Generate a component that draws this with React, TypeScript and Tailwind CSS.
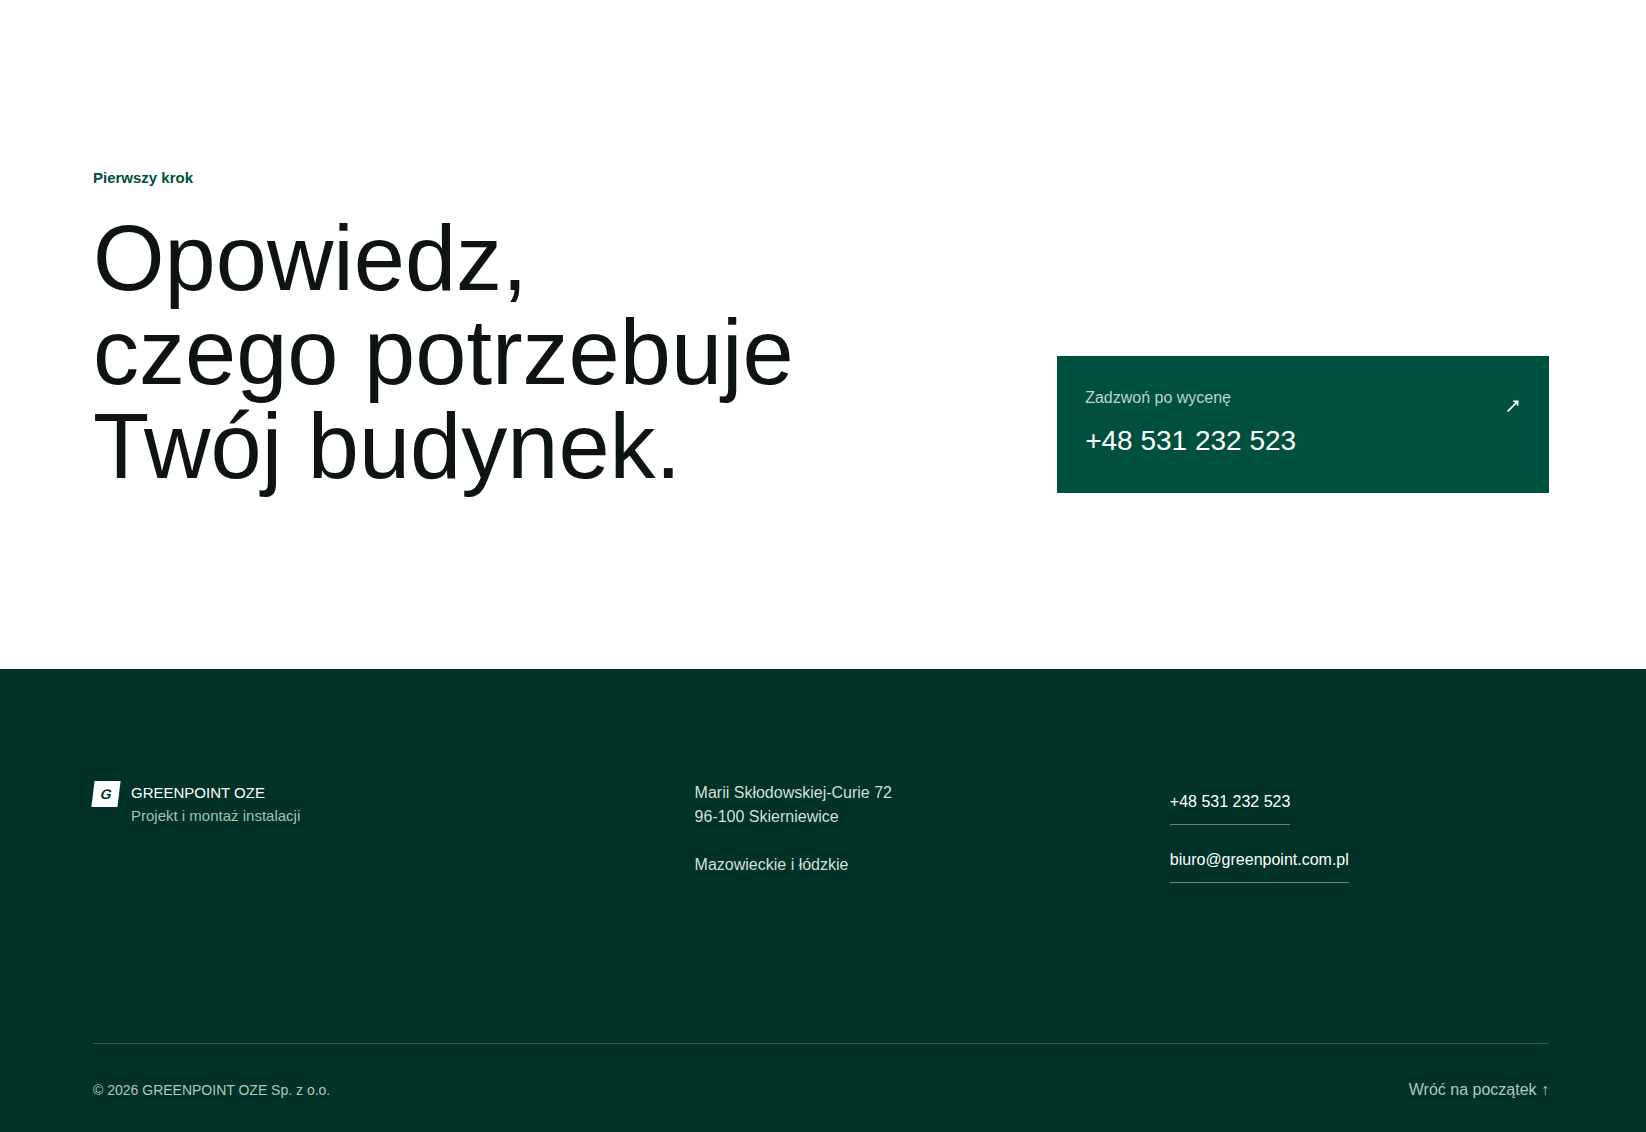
const PHONE_LABEL = "+48 531 232 523";
const PHONE_HREF = "tel:+48531232523";
const EMAIL = "biuro@greenpoint.com.pl";

function ArrowUpRight() {
  return (
    <svg
      className="mt-4 mr-0.5 shrink-0"
      width="12"
      height="12"
      viewBox="0 0 12 12"
      fill="none"
      aria-hidden="true"
    >
      <path d="M0.6 11.4 9.4 2.6" stroke="currentColor" strokeWidth="1.8" />
      <path d="M6 0.6 11.6 0.4 11.4 6 10 5.6 9.6 3.4 8.6 2.4 6.4 2Z" fill="currentColor" />
    </svg>
  );
}

function ContactSection() {
  return (
    <section
      id="kontakt"
      className="grid grid-cols-1 items-end gap-16 bg-white pt-[166px] pr-[97px] pb-44 pl-[93px] lg:grid-cols-[1.7fr_1fr] lg:gap-32"
    >
      <div>
        <p className="text-[15px] leading-6 font-bold text-[#005040]">Pierwszy krok</p>
        <h2 className="mt-[21px] text-[92px] leading-[94px] font-normal whitespace-nowrap text-[#0d1411]">
          Opowiedz,
          <br />
          czego potrzebuje
          <br />
          Twój budynek.
        </h2>
      </div>

      <a href={PHONE_HREF} className="flex items-start justify-between bg-[#005040] p-7 text-white">
        <span className="block">
          <span className="block text-base leading-7 text-white/75">Zadzwoń po wycenę</span>
          <span className="mt-1 block text-[28px] leading-[49px]">{PHONE_LABEL}</span>
        </span>
        <ArrowUpRight />
      </a>
    </section>
  );
}

function Footer() {
  return (
    <footer className="bg-[#003228] pt-28 pr-[97px] pb-5 pl-[93px]">
      <div className="grid grid-cols-1 gap-12 lg:grid-cols-[4fr_3fr_3fr] lg:gap-24">
        <div className="flex items-start gap-3">
          <span className="flex size-[26px] shrink-0 -skew-x-7 items-center justify-center bg-white text-sm font-bold text-[#003228] italic">
            G
          </span>
          <div className="text-[15px] leading-[23px]">
            <p className="text-white">GREENPOINT OZE</p>
            <p className="text-[#a3c1b1]">Projekt i montaż instalacji</p>
          </div>
        </div>

        <address className="text-base leading-6 text-[#d3dfd8] not-italic">
          <p>
            Marii Skłodowskiej-Curie 72
            <br />
            96-100 Skierniewice
          </p>
          <p className="mt-6">Mazowieckie i łódzkie</p>
        </address>

        <div className="flex flex-col items-start gap-3.5 text-base text-white">
          <a href={PHONE_HREF} className="flex h-11 items-center border-b border-white/40 pb-0.5">
            {PHONE_LABEL}
          </a>
          <a
            href={`mailto:${EMAIL}`}
            className="flex h-11 items-center border-b border-white/40 pb-0.5"
          >
            {EMAIL}
          </a>
        </div>
      </div>

      <div className="mt-40 flex items-center justify-between border-t border-white/20 pt-6 text-[#b3c6bd]">
        <p className="text-sm">© 2026 GREENPOINT OZE Sp. z o.o.</p>
        <a href="#top" className="flex h-11 items-center text-base">
          Wróć na początek ↑
        </a>
      </div>
    </footer>
  );
}

export default function App() {
  return (
    <main
      id="top"
      className="min-h-screen bg-[#003228] font-['Liberation_Sans',Arial,sans-serif]"
    >
      <ContactSection />
      <Footer />
    </main>
  );
}
